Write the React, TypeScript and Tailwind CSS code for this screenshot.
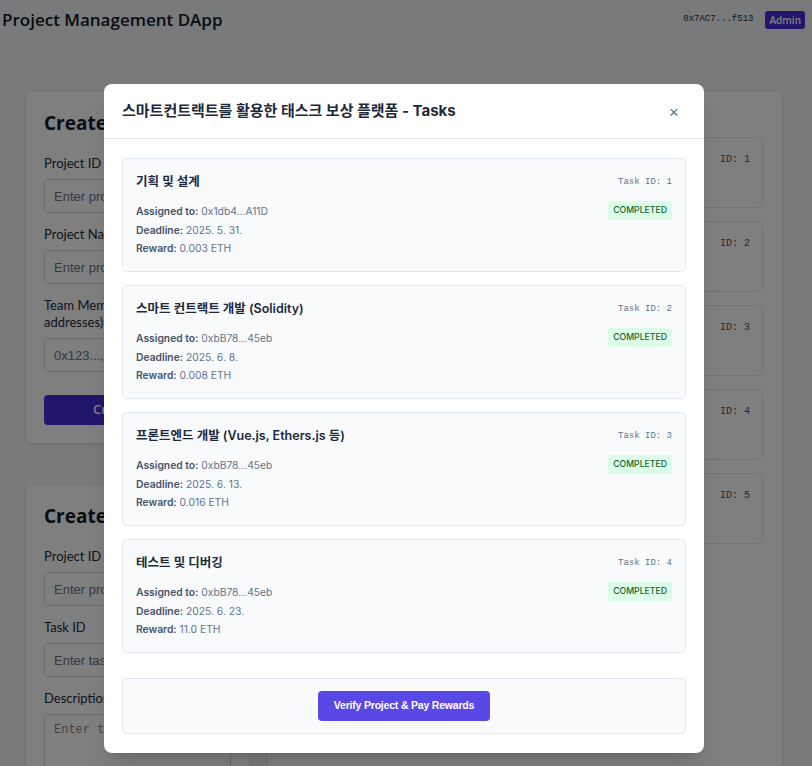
import React from "react";

const tasks = [
  { id: 1, name: "기획 및 설계", assignee: "0x1db4...A11D", deadline: "2025. 5. 31.", reward: "0.003 ETH" },
  { id: 2, name: "스마트 컨트랙트 개발 (Solidity)", assignee: "0xbB78...45eb", deadline: "2025. 6. 8.", reward: "0.008 ETH" },
  { id: 3, name: "프론트엔드 개발 (Vue.js, Ethers.js 등)", assignee: "0xbB78...45eb", deadline: "2025. 6. 13.", reward: "0.016 ETH" },
  { id: 4, name: "테스트 및 디버깅", assignee: "0xbB78...45eb", deadline: "2025. 6. 23.", reward: "11.0 ETH" },
];

const projects = [1, 2, 3, 4, 5];

const sans = "font-['Open_Sans','Noto_Sans_CJK_KR',sans-serif]";
const label = "font-['Lato','Open_Sans',sans-serif]";
const ui = "font-['Inter','Noto_Sans_CJK_KR',sans-serif]";
const mono = "font-['Liberation_Mono',monospace]";

function Field({ name, placeholder }: { name: React.ReactNode; placeholder: string }) {
  return (
    <div className="mb-[13px]">
      <label className={`mb-[7px] block text-[13px] leading-[17px] text-gray-800 ${label}`}>{name}</label>
      <input
        className="h-[34px] w-full rounded-[4px] border border-gray-300 bg-white px-[9px] font-['Liberation_Sans',sans-serif] text-[13px] placeholder:text-gray-500"
        placeholder={placeholder}
      />
    </div>
  );
}

function TaskCard({ t }: { t: (typeof tasks)[number] }) {
  return (
    <div className="min-h-[114px] rounded-[5px] border border-[#e2e8f0] bg-[#f8fafc] p-[13px]">
      <div className="flex items-start justify-between">
        <h3 className="text-[12.5px] font-semibold leading-[20px] text-[#1e293b]">{t.name}</h3>
        <span className={`text-[9px] leading-[20px] text-[#64748b] ${mono}`}>Task ID: {t.id}</span>
      </div>
      <div className="mt-[10px] flex items-start justify-between">
        <div className="text-[10.3px] leading-[18.5px] text-[#64748b]">
          <p><span className="font-semibold text-[#475569]">Assigned to:</span> {t.assignee}</p>
          <p><span className="font-semibold text-[#475569]">Deadline:</span> {t.deadline}</p>
          <p><span className="font-semibold text-[#475569]">Reward:</span> {t.reward}</p>
        </div>
        <span className="mt-[-1px] rounded-[3px] bg-[#dcfce7] px-[5px] py-[3px] text-[8.7px] font-medium leading-[13px] text-[#166534]">
          COMPLETED
        </span>
      </div>
    </div>
  );
}

export default function App() {
  return (
    <div className="relative h-[766px] overflow-hidden bg-gray-100">
      {/* Header */}
      <header className="flex h-[40px] items-center justify-between pl-[2px] pr-[7px]">
        <h1 className={`text-[17px] font-semibold text-gray-900 ${sans}`}>Project Management DApp</h1>
        <div className="flex items-center gap-[12px]">
          <span className={`text-[9px] text-gray-800 ${mono}`}>0x7AC7...f513</span>
          <span className={`rounded-[3px] bg-indigo-700 px-[4px] py-[2px] text-[10px] font-semibold leading-[14px] text-white ${sans}`}>
            Admin
          </span>
        </div>
      </header>

      {/* Main */}
      <main className="grid grid-cols-[223px_514px] gap-[19px] pl-[26px] pt-[52px]">
        <div className="flex flex-col gap-[42px]">
          <section className="rounded-[6px] bg-white p-[18px] shadow-sm">
            <h2 className={`mb-[18px] text-[19px] font-bold leading-[27px] text-gray-900 ${sans}`}>Create Project</h2>
            <Field name="Project ID" placeholder="Enter project ID" />
            <Field name="Project Name" placeholder="Enter project name" />
            <Field
              name={
                <>
                  <span className="whitespace-nowrap">Team Members (comma separated</span>
                  <br />
                  addresses)
                </>
              }
              placeholder="0x123...,0x456..."
            />
            <button className={`mt-[10px] h-[30px] w-full rounded-[4px] bg-indigo-700 text-[13px] font-semibold text-white ${sans}`}>
              Create Project
            </button>
          </section>
          <section className="rounded-[6px] bg-white p-[18px] shadow-sm">
            <h2 className={`mb-[18px] text-[19px] font-bold leading-[27px] text-gray-900 ${sans}`}>Create Task</h2>
            <Field name="Project ID" placeholder="Enter project ID" />
            <Field name="Task ID" placeholder="Enter task ID" />
            <label className={`mb-[7px] block text-[13px] leading-[17px] text-gray-800 ${label}`}>Description</label>
            <textarea
              className={`h-[80px] w-full rounded-[4px] border border-gray-300 bg-white px-[9px] py-[6px] text-[12px] ${mono}`}
              placeholder="Enter task description"
            />
          </section>
        </div>

        <section className="h-[700px] rounded-[6px] bg-white px-[19px] pt-[18px] shadow-sm">
          <h2 className={`text-[19px] font-bold leading-[27px] text-gray-900 ${sans}`}>Projects</h2>
          <div className="flex flex-col gap-[13px]">
            {projects.map((p) => (
              <div key={p} className="flex h-[71px] justify-between rounded-[5px] border border-gray-200 bg-white pl-[13px] pr-[12px] pt-[14px]">
                <span className={`text-[13px] font-semibold text-gray-800 ${sans}`}>Project {p}</span>
                <span className={`text-[10px] text-gray-600 ${mono}`}>ID: {p}</span>
              </div>
            ))}
          </div>
        </section>
      </main>

      {/* Modal */}
      <div className="absolute inset-0 flex items-start justify-start bg-black/50 pl-[104px] pt-[84px]">
        <div className={`w-[600px] rounded-[8px] bg-white shadow-xl ${ui}`}>
          <div className="flex h-[55px] items-center justify-between border-b border-[#e2e8f0] px-[18px]">
            <h2 className="text-[15px] font-bold text-[#1e293b]">스마트컨트랙트를 활용한 태스크 보상 플랫폼 - Tasks</h2>
            <button className="mr-[7px] text-[16px] leading-none text-[#64748b]">×</button>
          </div>
          <div className="px-[18px] pb-[19px] pt-[19px]">
            <div className="flex flex-col gap-[13px]">
              {tasks.map((t) => (
                <TaskCard key={t.id} t={t} />
              ))}
            </div>
            <div className="mt-[25px] flex h-[56px] items-center justify-center rounded-[5px] border border-[#e2e8f0] bg-[#f8fafc]">
              <button className="h-[30px] w-[172px] rounded-[4px] bg-[#5a48e6] font-['Liberation_Sans',sans-serif] text-[10.5px] font-bold tracking-[-0.2px] text-white">
                Verify Project &amp; Pay Rewards
              </button>
            </div>
          </div>
        </div>
      </div>
    </div>
  );
}
